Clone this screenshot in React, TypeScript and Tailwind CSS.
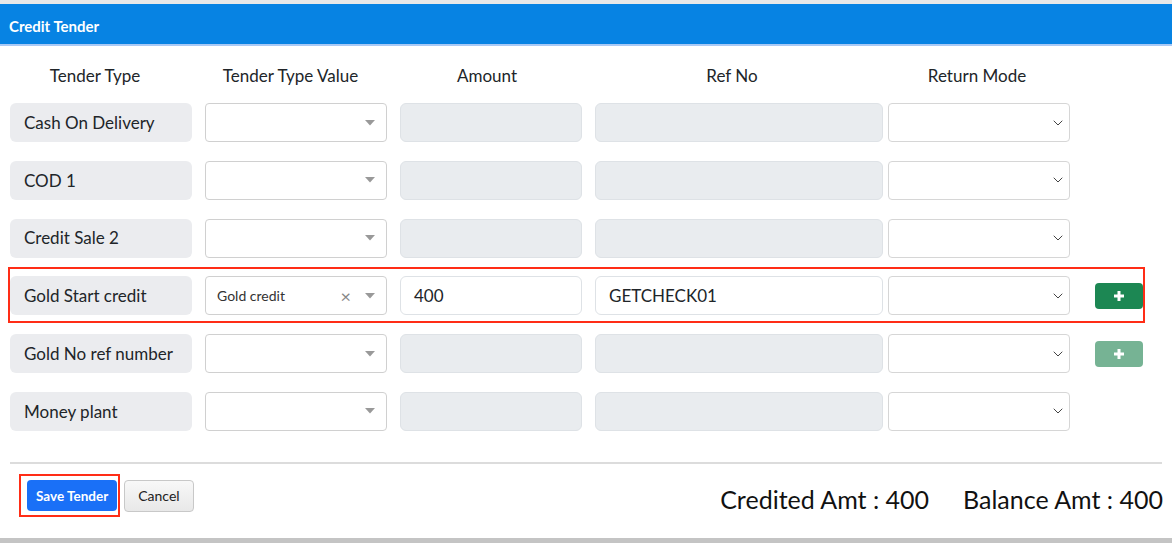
import React from "react";

type Row = {
  label: string;
  value?: string;
  amount?: string;
  refNo?: string;
  plus?: "active" | "disabled";
  highlight?: boolean;
};

const rows: Row[] = [
  { label: "Cash On Delivery" },
  { label: "COD 1" },
  { label: "Credit Sale 2" },
  {
    label: "Gold Start credit",
    value: "Gold credit",
    amount: "400",
    refNo: "GETCHECK01",
    plus: "active",
    highlight: true,
  },
  { label: "Gold No ref number", plus: "disabled" },
  { label: "Money plant" },
];

function Caret() {
  return (
    <svg width="10" height="6" viewBox="0 0 10 6" className="shrink-0">
      <path d="M0 0h10L5 5.5z" fill="#999" />
    </svg>
  );
}

function Chevron() {
  return (
    <svg width="10" height="6" viewBox="0 0 10 6" fill="none" className="shrink-0">
      <path d="M1 1l4 4 4-4" stroke="#444" strokeWidth="1" strokeLinecap="round" strokeLinejoin="round" />
    </svg>
  );
}

function PlusIcon() {
  return (
    <svg width="12" height="12" viewBox="0 0 12 12">
      <path d="M6 1v10M1 6h10" stroke="#fff" strokeWidth="3" />
    </svg>
  );
}

function TenderRow({ row }: { row: Row }) {
  const filled = !!row.amount;
  return (
    <div className="relative flex h-[39px] items-center text-[17px] text-[#212529]">
      {row.highlight && (
        <div className="pointer-events-none absolute -left-[2px] -top-[9px] -bottom-[8px] w-[1137px] border-[2.5px] border-[#ff2d16]" />
      )}
      <div className="flex h-full w-[182px] items-center rounded-md bg-[#ebecef] pl-[14px]">
        {row.label}
      </div>
      <div className="ml-[13px] flex h-full w-[182px] items-center rounded border border-[#d0d0d0] bg-white pl-[11px] pr-[11px]">
        <span className="flex-1 text-[14px] text-[#333]">{row.value}</span>
        {row.value && <span className="mr-[14px] text-[18px] leading-none text-[#888]">×</span>}
        <Caret />
      </div>
      <div
        className={`ml-[13px] flex h-full w-[182px] items-center rounded-md border border-[#dee2e6] pl-[13px] ${
          filled ? "bg-white" : "bg-[#e9ecef]"
        }`}
      >
        {row.amount}
      </div>
      <div
        className={`ml-[13px] flex h-full w-[288px] items-center rounded-md border border-[#dee2e6] pl-[13px] ${
          filled ? "bg-white" : "bg-[#e9ecef]"
        }`}
      >
        {row.refNo}
      </div>
      <div className="ml-[5px] flex h-full w-[182px] items-center justify-end rounded border border-[#d6d6d6] bg-white pr-[6px]">
        <Chevron />
      </div>
      {row.plus && (
        <div
          className={`ml-[25px] flex h-[26px] w-[48px] items-center justify-center rounded ${
            row.plus === "active" ? "bg-[#1c8753]" : "bg-[#76b394]"
          }`}
        >
          <PlusIcon />
        </div>
      )}
    </div>
  );
}

export default function App() {
  const headers: [string, string][] = [
    ["Tender Type", "w-[170px]"],
    ["Tender Type Value", "w-[221px]"],
    ["Amount", "w-[172px]"],
    ["Ref No", "w-[318px]"],
    ["Return Mode", "w-[172px]"],
  ];

  return (
    <div className="flex h-[543px] w-[1172px] flex-col overflow-hidden bg-[#e4e4e4] font-['Lato','Noto_Sans',sans-serif]">
      {/* page behind the modal */}
      <div className="h-[4px] shrink-0 bg-[#e8e8e8]" />

      <div className="flex h-[534px] shrink-0 flex-col bg-white">
        {/* title bar */}
        <div className="flex h-[42px] shrink-0 items-center border-b-2 border-[#a9c9f5] bg-[#0783e3] pl-[9px] pt-[4px] text-[15px] font-bold text-white">
          Credit Tender
        </div>

        {/* column headers */}
        <div className="flex h-[57px] shrink-0 items-center pl-[10px] pt-[2px] text-[17px] text-[#212529]">
          {headers.map(([h, cls]) => (
            <div key={h} className={`${cls} text-center`}>
              {h}
            </div>
          ))}
        </div>

        {/* rows */}
        <div className="flex flex-col gap-[18.8px] pl-[10px]">
          {rows.map((r) => (
            <TenderRow key={r.label} row={r} />
          ))}
        </div>

        {/* divider */}
        <div className="mx-[10px] mt-[31px] h-[2px] shrink-0 bg-[#dcdcdc]" />

        {/* footer */}
        <div className="flex flex-1 items-center pl-[19px] pr-[9px] pb-[10px]">
          <div className="border-[2.5px] border-[#ff2d16] py-[4px] pl-[6px] pr-[1px]">
            <div className="flex h-[31px] items-center rounded-sm bg-[#1a70f7] px-[9px] text-[13.5px] font-bold text-white">
              Save Tender
            </div>
          </div>
          <div className="ml-[4px] flex h-[32px] items-center rounded border border-[#c8c8c8] bg-gradient-to-b from-[#f8f8f8] to-[#e8e8e8] px-[13px] text-[14px] text-[#222]">
            Cancel
          </div>
          <div className="ml-auto mt-[7px] flex gap-[34px] text-[25px] text-[#111]">
            <span>Credited Amt : 400</span>
            <span>Balance Amt : 400</span>
          </div>
        </div>
      </div>

      <div className="flex-1 bg-[#c4c4c4]" />
    </div>
  );
}
